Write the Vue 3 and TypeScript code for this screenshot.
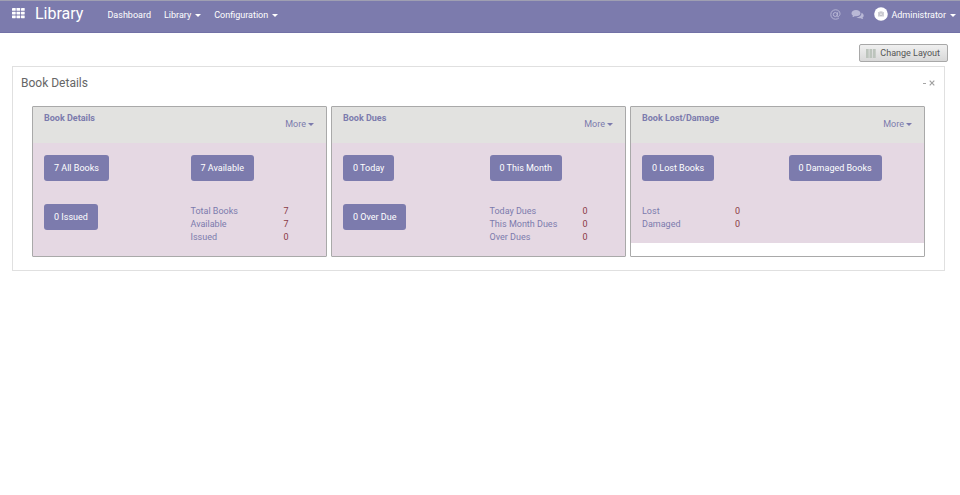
<script setup lang="ts">
interface Stat {
  label: string
  value: number
}

interface Card {
  title: string
  actions: string[]
  stats: Stat[]
}

const cards: Card[] = [
  {
    title: 'Book Details',
    actions: ['7 All Books', '7 Available', '0 Issued'],
    stats: [
      { label: 'Total Books', value: 7 },
      { label: 'Available', value: 7 },
      { label: 'Issued', value: 0 },
    ],
  },
  {
    title: 'Book Dues',
    actions: ['0 Today', '0 This Month', '0 Over Due'],
    stats: [
      { label: 'Today Dues', value: 0 },
      { label: 'This Month Dues', value: 0 },
      { label: 'Over Dues', value: 0 },
    ],
  },
  {
    title: 'Book Lost/Damage',
    actions: ['0 Lost Books', '0 Damaged Books'],
    stats: [
      { label: 'Lost', value: 0 },
      { label: 'Damaged', value: 0 },
    ],
  },
]

const menu = [
  { label: 'Dashboard', caret: false },
  { label: 'Library', caret: true },
  { label: 'Configuration', caret: true },
]

const gridCells = [0, 1, 2].flatMap((r) => [0, 1, 2].map((c) => ({ x: c * 4.5, y: r * 3.7 })))
</script>

<template>
  <div class="page">
    <header class="navbar">
      <a class="apps" href="#" aria-label="Applications">
        <svg width="13" height="11" viewBox="0 0 13 11">
          <rect v-for="(c, i) in gridCells" :key="i" :x="c.x" :y="c.y" width="3.7" height="2.8" rx="0.4" fill="#fff" />
        </svg>
      </a>
      <a class="brand" href="#">Library</a>
      <nav class="menu">
        <a v-for="m in menu" :key="m.label" href="#">{{ m.label }}<span v-if="m.caret" class="caret"></span></a>
      </nav>
      <div class="systray">
        <a class="dim" href="#" aria-label="Mentions">
          <svg width="11" height="11" viewBox="0 0 22 22" fill="none" stroke="currentColor" stroke-width="1.9">
            <circle cx="10.6" cy="11" r="4" />
            <path d="M15.4 6.5l-1.2 7c-.3 2 1 2.4 2.4 1.6 2.2-1.2 3.4-3.2 3.4-5.6 0-4.6-3.8-7.9-8.8-7.9C5.700 1.600 1.600 5.600 1.600 11s4 9.400 9.500 9.400c2.700 0 5-.9 6.800-2.500" />
          </svg>
        </a>
        <a class="dim" href="#" aria-label="Conversations">
          <svg width="13" height="11" viewBox="0 0 26 22" fill="currentColor">
            <path d="M10 2C4.700 2 1 4.800 1 8.400c0 2 1.200 3.800 3.100 5-.3 1.100-.9 1.900-1.700 2.700 1.900-.1 3.500-.7 4.800-1.800.9.200 1.800.3 2.800.3 5.200 0 9-2.700 9-6.200S15.200 2 10 2z" />
            <path d="M20.800 7.500c.8 4.900-3.600 9-10 9.200 1.600 1.300 3.900 2 6.400 2 .9 0 1.800-.1 2.600-.3 1.300 1.100 2.900 1.700 4.800 1.800-.8-.8-1.400-1.600-1.700-2.700 1.600-1 2.500-2.600 2.500-4.300 0-2.500-1.700-4.600-4.600-5.700z" />
          </svg>
        </a>
        <a class="user" href="#">
          <svg class="avatar" width="14" height="14" viewBox="0 0 14 14">
            <circle cx="7" cy="7" r="6.800" fill="#fff" />
            <path d="M4 5h1.200l.5-.8h2.600l.5.8H10v4.500H4z" fill="#d0d0d6" />
            <circle cx="7" cy="7.200" r="1.400" fill="#eee" stroke="#b0b0b8" stroke-width="0.600" />
          </svg>
          <span class="name">Administrator<span class="caret"></span></span>
        </a>
      </div>
    </header>

    <main class="content">
      <div class="toolbar">
        <button class="change" type="button">
          <svg width="10" height="9" viewBox="0 0 10 9" fill="#bcc4bc">
            <rect width="2.700" height="9" /><rect x="3.500" width="2.700" height="9" /><rect x="7" width="2.700" height="9" />
          </svg>
          Change Layout
        </button>
      </div>

      <section class="panel">
        <div class="panel-head">
          <h1>Book Details</h1>
          <div class="tools">
            <button type="button" aria-label="Minimize">
              <svg width="3" height="6" viewBox="0 0 3 6"><path d="M0 3.500h3" stroke="#a5a5a5" /></svg>
            </button>
            <button type="button" aria-label="Close">
              <svg width="6" height="6" viewBox="0 0 6 6"><path d="M.7.7l4.600 4.600M5.300.7L.7 5.300" stroke="#a0a0a0" stroke-width="1.200" /></svg>
            </button>
          </div>
        </div>

        <div class="cards">
          <article v-for="card in cards" :key="card.title" class="card">
            <header class="card-head">
              <h2>{{ card.title }}</h2>
              <a href="#" class="more">More<span class="caret"></span></a>
            </header>
            <div class="card-body">
              <div v-for="a in card.actions" :key="a" class="cell">
                <button class="action" type="button">{{ a }}</button>
              </div>
              <table class="stats">
                <tbody>
                  <tr v-for="s in card.stats" :key="s.label">
                    <th scope="row">{{ s.label }}</th>
                    <td>{{ s.value }}</td>
                  </tr>
                </tbody>
              </table>
            </div>
          </article>
        </div>
      </section>
    </main>
  </div>
</template>

<style>
body {
  background: #fff;
}
</style>

<style scoped>
.page {
  font: 9px/13px Roboto, 'Liberation Sans', sans-serif;
  color: #4c4c4c;
}

a {
  color: inherit;
  text-decoration: none;
}

button {
  font: inherit;
  cursor: pointer;
}

svg {
  display: block;
}

.navbar {
  display: flex;
  align-items: center;
  box-sizing: border-box;
  height: 33px;
  padding: 0 4px 6px 12px;
  color: #fff;
  background: #7c7bad;
  border-top: 1px solid #9f9fb2;
  border-bottom: 1px solid #7271a6;
}

.brand {
  margin-left: 10px;
  font-size: 16px;
  line-height: 20px;
}

.menu {
  display: flex;
  gap: 13px;
  margin-left: 24px;
  padding-top: 3px;
}

.caret {
  display: inline-block;
  margin-left: 4px;
  vertical-align: middle;
  border-top: 3px solid currentColor;
  border-left: 3px solid transparent;
  border-right: 3px solid transparent;
}

.systray {
  display: flex;
  align-items: center;
  gap: 10px;
  margin-left: auto;
}

.dim {
  padding-top: 2px;
  color: #b9b8d6;
}

.user {
  display: flex;
  align-items: center;
}

.name {
  padding-top: 3px;
}

.avatar {
  margin-right: 3px;
}

.content {
  padding: 11px 15px 0 12px;
}

.toolbar {
  display: flex;
  justify-content: flex-end;
  margin-right: -3px;
}

.change {
  display: flex;
  align-items: center;
  gap: 4px;
  height: 18px;
  padding: 0 7px 0 6px;
  color: #555;
  background: linear-gradient(#f0f0f0, #d8d8d8);
  border: 1px solid #a8a8a8;
  border-radius: 2px;
}

.panel {
  margin-top: 4px;
  padding: 0 19px 13px;
  border: 1px solid #e0e0e0;
}

.panel-head {
  display: flex;
  align-items: center;
  justify-content: space-between;
  height: 32px;
  margin: 0 -10px 7px -11px;
}

h1 {
  margin: 0;
  font-size: 12px;
  font-weight: 400;
  color: #666;
}

.tools {
  display: flex;
  gap: 3px;
}

.tools button {
  padding: 0;
  background: none;
  border: 0;
}

.cards {
  display: grid;
  grid-template-columns: repeat(3, 1fr);
  gap: 4px;
}

.card {
  border: 1px solid #a9a9a9;
  border-radius: 1px;
  color: #7c7bad;
}

.card-head {
  display: flex;
  justify-content: space-between;
  box-sizing: border-box;
  height: 36px;
  padding: 5px 12px 0 11px;
  background: #e2e2e0;
}

h2 {
  margin: 0;
  font-size: inherit;
  line-height: inherit;
  font-weight: 700;
}

.more {
  padding-top: 6px;
}

.more .caret {
  margin-left: 2px;
}

.card-body {
  display: grid;
  grid-template-columns: 1fr 1fr;
  row-gap: 23px;
  align-items: start;
  padding: 12px 0;
  background: #e5d8e3;
}

.cell {
  display: flex;
  padding-left: 11px;
}

.action {
  height: 26px;
  padding: 0 10px;
  color: #fff;
  background: #7c7bad;
  border: 0;
  border-radius: 3px;
}

.stats {
  margin: 1px 0 0 11px;
  border-collapse: collapse;
}

.stats th {
  width: 93px;
  padding: 0;
  font-weight: 400;
  text-align: left;
}

.stats td {
  padding: 0;
  color: #8b3a45;
}
</style>
